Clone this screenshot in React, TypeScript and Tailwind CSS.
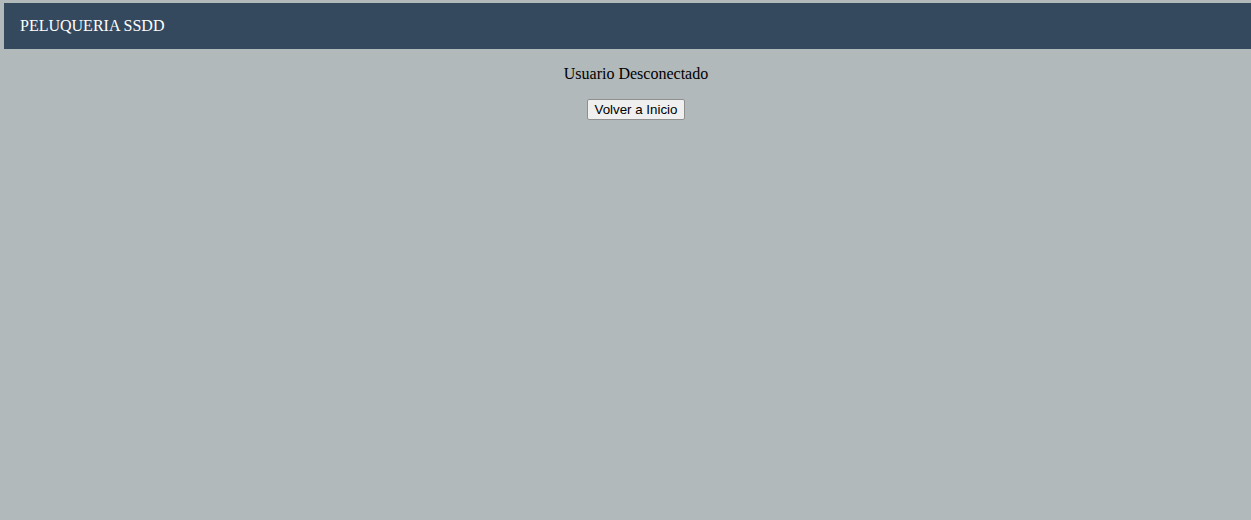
export default function App() {
  return (
    <div className="min-h-[520px] bg-[#b2b9ba] pl-[4px] pt-[3px] font-['Liberation_Serif',serif] text-[16px] text-black">
      <div className="flex h-[46px] items-center bg-[#34495e] pl-[16px] text-white">
        PELUQUERIA SSDD
      </div>
      <div className="flex flex-col items-center pl-[17px]">
        <p className="mt-[16px] leading-[18px]">Usuario Desconectado</p>
        <button className="mt-[16px] h-[21px] rounded-[2px] border border-[#8f8f8f] bg-[#efefef] px-[7px] font-['Liberation_Sans',sans-serif] text-[13.33px] leading-[15px] text-black">
          Volver a Inicio
        </button>
      </div>
    </div>
  );
}
